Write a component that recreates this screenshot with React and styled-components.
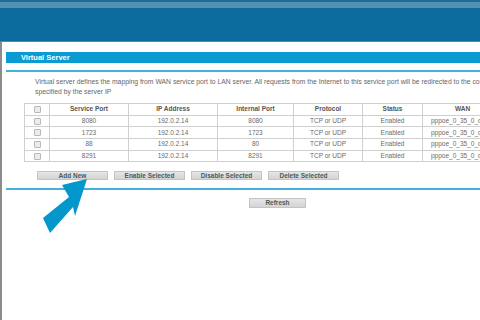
import React from 'react'
import styled, { createGlobalStyle } from 'styled-components'

const GlobalStyle = createGlobalStyle`
  html, body {
    margin: 0;
    padding: 0;
    width: 480px;
    height: 320px;
    overflow: hidden;
    background: #ffffff;
  }
  #root {
    width: 480px;
    height: 320px;
  }
`

const rules = [
  { port: '8080', ip: '192.0.2.14', internal: '8080' },
  { port: '1723', ip: '192.0.2.14', internal: '1723' },
  { port: '88', ip: '192.0.2.14', internal: '80' },
  { port: '8291', ip: '192.0.2.14', internal: '8291' },
]

const actions = ['Add New', 'Enable Selected', 'Disable Selected', 'Delete Selected']

function App() {
  return (
    <Page>
      <GlobalStyle />
      <Banner>
        <BannerStrip />
      </Banner>
      <Body>
        <SideRule />
        <Content>
          <TitleBar>Virtual Server</TitleBar>
          <Divider $top={7} />
          <Description>
            Virtual server defines the mapping from WAN service port to LAN server. All requests from the Internet to this service port will be redirected to the corresponding server
            <br />
            specified by the server IP
          </Description>
          <Table>
            <colgroup>
              <col style={{ width: 25 }} />
              <col style={{ width: 79 }} />
              <col style={{ width: 89 }} />
              <col style={{ width: 76 }} />
              <col style={{ width: 69 }} />
              <col style={{ width: 60 }} />
              <col style={{ width: 80 }} />
            </colgroup>
            <thead>
              <tr>
                <Head><Check /></Head>
                <Head>Service Port</Head>
                <Head>IP Address</Head>
                <Head>Internal Port</Head>
                <Head>Protocol</Head>
                <Head>Status</Head>
                <Head>WAN</Head>
              </tr>
            </thead>
            <tbody>
              {rules.map((r) => (
                <tr key={r.port}>
                  <Cell><Check /></Cell>
                  <Cell>{r.port}</Cell>
                  <Cell>{r.ip}</Cell>
                  <Cell>{r.internal}</Cell>
                  <Cell>TCP or UDP</Cell>
                  <Cell>Enabled</Cell>
                  <Cell $left>pppoe_0_35_0_d</Cell>
                </tr>
              ))}
            </tbody>
          </Table>
          <ButtonRow>
            {actions.map((a) => (
              <Button key={a} $width={71}>{a}</Button>
            ))}
          </ButtonRow>
          <Divider $top={8} />
          <RefreshRow>
            <Button $width={57} $height={10}>Refresh</Button>
          </RefreshRow>
        </Content>
      </Body>
      <Arrow viewBox="0 0 480 320">
        <polygon points="87,179 62,185 69,197 43,218 50,233 73,207 75,216" fill="#0497cc" />
      </Arrow>
    </Page>
  )
}

const Page = styled.div`
  position: relative;
  width: 480px;
  height: 320px;
  overflow: hidden;
  font-family: "Liberation Sans", Arial, sans-serif;
  display: flex;
  flex-direction: column;
`

const Banner = styled.div`
  height: 42px;
  flex: none;
  background: #0c6c9d;
  border-top: 2px solid #1f6d96;
  box-sizing: border-box;
  border-bottom: 1px solid #3f90c0;
`

const BannerStrip = styled.div`
  height: 6px;
  background: #5391b2;
`

const Body = styled.div`
  flex: 1;
  display: flex;
`

const SideRule = styled.div`
  width: 2px;
  flex: none;
  background: #8c8c8c;
`

const Content = styled.div`
  flex: none;
  width: 600px;
  padding: 10px 0 0 4px;
`

const TitleBar = styled.div`
  height: 11px;
  background: #0a9bd3;
  color: #ffffff;
  font-size: 7.5px;
  font-weight: bold;
  line-height: 11px;
  padding-left: 15px;
`

const Divider = styled.div`
  height: 1.5px;
  margin-top: ${(p) => p.$top}px;
  background: #45b0da;
`

const Description = styled.p`
  margin: 5px 0 0 29px;
  font-size: 6.8px;
  line-height: 10px;
  color: #666666;
  white-space: nowrap;
`

const Table = styled.table`
  margin: 6px 0 0 18px;
  border-collapse: collapse;
  table-layout: fixed;
  width: 478px;
  font-size: 6.5px;
`

const Head = styled.th`
  height: 11px;
  padding: 0;
  border: 1px solid #cfcfcf;
  color: #555555;
  font-weight: bold;
  text-align: center;
  line-height: 10px;
`

const Cell = styled.td`
  height: 10.7px;
  padding: 0 0 0 ${(p) => (p.$left ? '8px' : '0')};
  border: 1px solid #cfcfcf;
  color: #6a6a6a;
  text-align: ${(p) => (p.$left ? 'left' : 'center')};
  line-height: 10px;
  white-space: nowrap;
  overflow: hidden;
`

const Check = styled.span`
  display: inline-block;
  width: 5px;
  height: 5px;
  border: 1px solid #b8b8b8;
  background: #ececec;
  border-radius: 1px;
  vertical-align: middle;
`

const ButtonRow = styled.div`
  display: flex;
  gap: 6px;
  margin: 9px 0 0 31px;
`

const RefreshRow = styled.div`
  display: flex;
  margin: 8px 0 0 243px;
`

const Button = styled.div`
  width: ${(p) => p.$width}px;
  height: ${(p) => p.$height || 9}px;
  box-sizing: border-box;
  background: linear-gradient(#e6e6e6, #d4d4d4);
  border: 1px solid #c4c4c4;
  color: #4a5a5a;
  font-size: 6.5px;
  font-weight: bold;
  line-height: ${(p) => (p.$height || 9) - 2}px;
  text-align: center;
  white-space: nowrap;
`

const Arrow = styled.svg`
  position: absolute;
  left: 0;
  top: 0;
  width: 480px;
  height: 320px;
  pointer-events: none;
`

export default App
